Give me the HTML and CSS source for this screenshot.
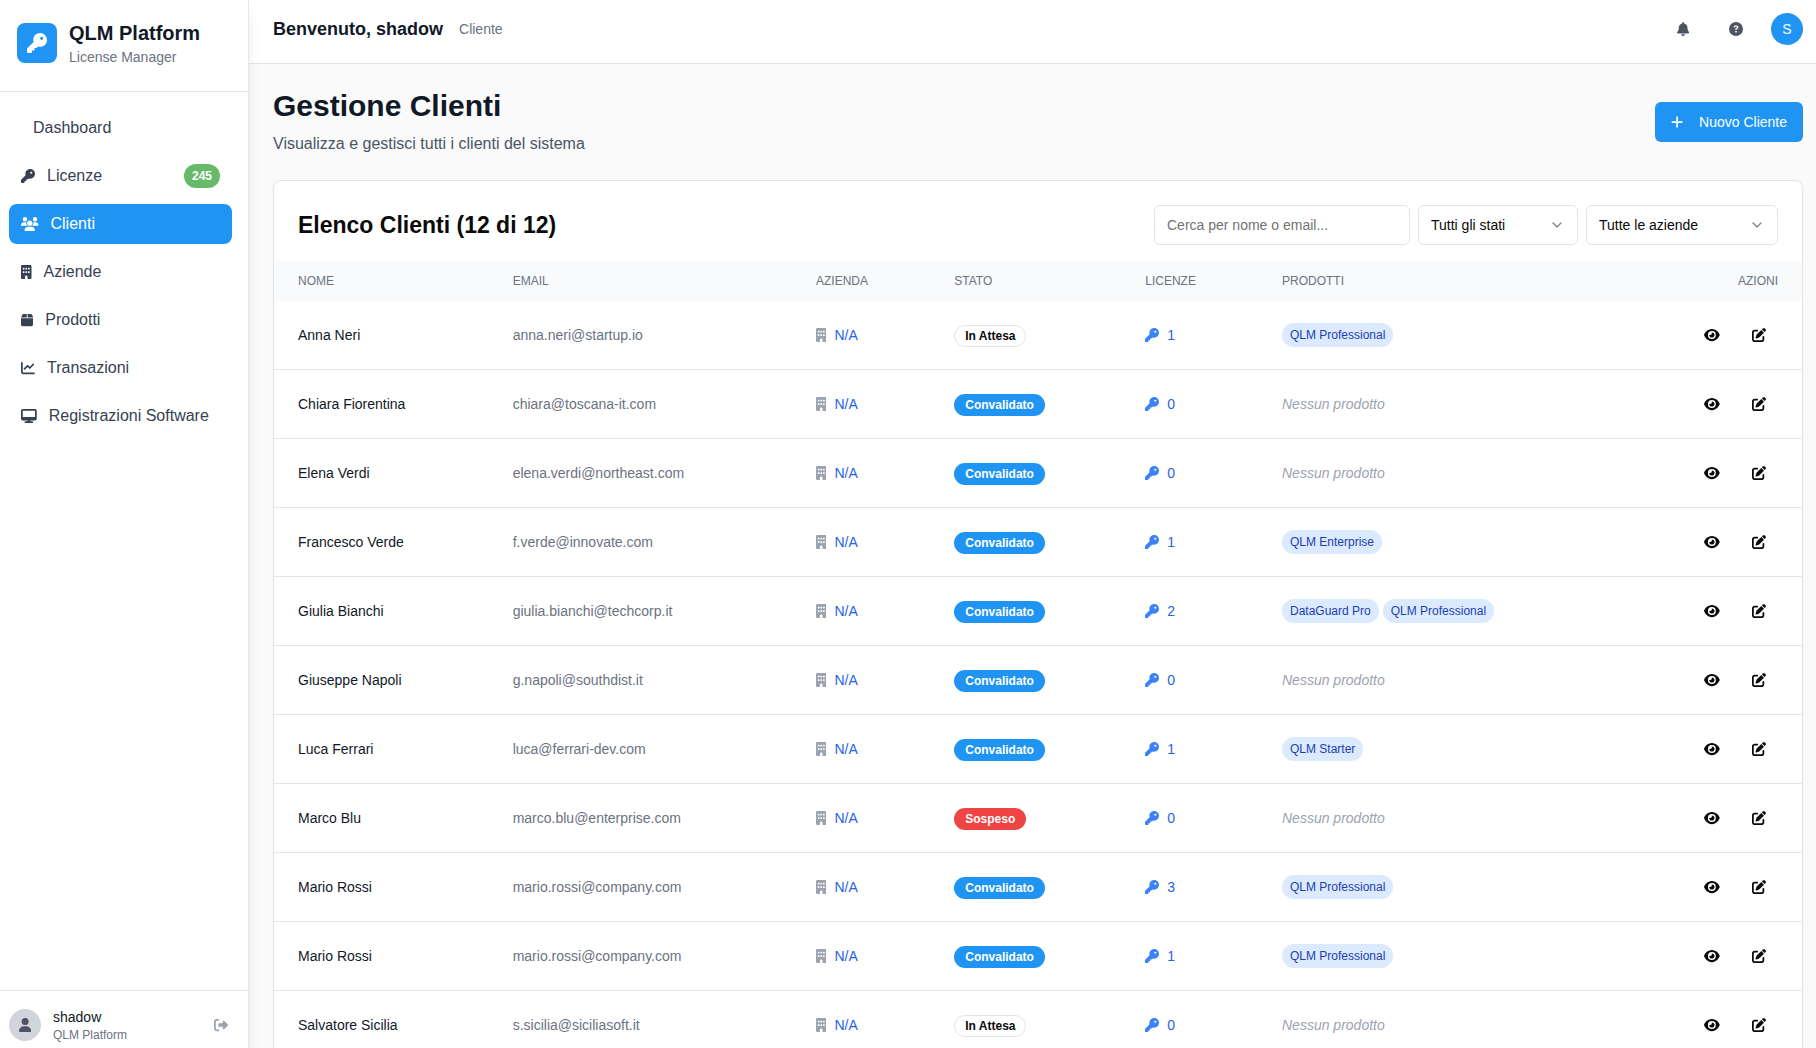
FILE: index.html
```html
<!DOCTYPE html>
<html lang="it">
<head>
<meta charset="utf-8">
<meta name="viewport" content="width=device-width, initial-scale=1">
<title>QLM Platform - Gestione Clienti</title>
<link rel="stylesheet" href="styles.css">
</head>
<body>
<svg class="sprite" aria-hidden="true">
  <defs>
    <path id="key" d="M336 352c97.2 0 176-78.8 176-176S433.2 0 336 0S160 78.8 160 176c0 18.7 2.9 36.8 8.3 53.7L7 391c-4.5 4.5-7 10.6-7 17v80c0 13.3 10.7 24 24 24h80c13.3 0 24-10.7 24-24V448h40c13.3 0 24-10.7 24-24V384h40c6.4 0 12.5-2.5 17-7l33.3-33.3c16.9 5.4 35 8.3 53.7 8.3zM376 96a40 40 0 1 1 0 80 40 40 0 1 1 0-80z"/>
    <path id="building" d="M48 0C21.5 0 0 21.5 0 48V464c0 26.5 21.5 48 48 48h96V432c0-26.5 21.5-48 48-48s48 21.5 48 48v80h96c26.5 0 48-21.5 48-48V48c0-26.5-21.5-48-48-48H48zM64 240c0-8.8 7.2-16 16-16h32c8.8 0 16 7.2 16 16v32c0 8.8-7.2 16-16 16H80c-8.8 0-16-7.2-16-16V240zm112-16h32c8.8 0 16 7.2 16 16v32c0 8.8-7.2 16-16 16H176c-8.8 0-16-7.2-16-16V240c0-8.8 7.2-16 16-16zm80 16c0-8.8 7.2-16 16-16h32c8.8 0 16 7.2 16 16v32c0 8.8-7.2 16-16 16H272c-8.8 0-16-7.2-16-16V240zM80 96h32c8.8 0 16 7.2 16 16v32c0 8.8-7.2 16-16 16H80c-8.8 0-16-7.2-16-16V112c0-8.8 7.2-16 16-16zm80 16c0-8.8 7.2-16 16-16h32c8.8 0 16 7.2 16 16v32c0 8.8-7.2 16-16 16H176c-8.8 0-16-7.2-16-16V112zM272 96h32c8.8 0 16 7.2 16 16v32c0 8.8-7.2 16-16 16H272c-8.8 0-16-7.2-16-16V112c0-8.8 7.2-16 16-16z"/>
    <path id="users" d="M144 0a80 80 0 1 1 0 160A80 80 0 1 1 144 0zM512 0a80 80 0 1 1 0 160A80 80 0 1 1 512 0zM0 298.7C0 239.8 47.8 192 106.7 192h42.7c15.9 0 31 3.5 44.6 9.7c-1.3 7.2-1.9 14.7-1.9 22.3c0 38.2 16.8 72.5 43.3 96c-.2 0-.4 0-.7 0H21.3C9.6 320 0 310.4 0 298.7zM405.3 320c-.2 0-.4 0-.7 0c26.6-23.5 43.3-57.8 43.3-96c0-7.6-.7-15-1.9-22.3c13.6-6.3 28.7-9.7 44.6-9.7h42.7C592.2 192 640 239.8 640 298.7c0 11.8-9.6 21.3-21.3 21.3H405.3zM224 224a96 96 0 1 1 192 0 96 96 0 1 1 -192 0zM128 485.3C128 411.7 187.7 352 261.3 352H378.7C452.3 352 512 411.7 512 485.3c0 14.7-11.9 26.7-26.7 26.7H154.7c-14.7 0-26.7-11.9-26.7-26.7z"/>
    <path id="eye" d="M288 32c-80.8 0-145.5 36.8-192.6 80.6C48.6 156 17.3 208 2.5 243.7c-3.3 7.9-3.3 16.7 0 24.6C17.3 304 48.6 356 95.4 399.4C142.5 443.2 207.2 480 288 480s145.5-36.8 192.6-80.6c46.8-43.5 78.1-95.4 93-131.1c3.3-7.9 3.3-16.7 0-24.6c-14.9-35.7-46.2-87.7-93-131.1C433.5 68.8 368.8 32 288 32zM144 256a144 144 0 1 1 288 0 144 144 0 1 1 -288 0zm144-64c0 35.3-28.7 64-64 64c-7.1 0-13.9-1.2-20.3-3.3c-5.5-1.8-11.9 1.6-11.7 7.4c.3 6.9 1.3 13.8 3.2 20.7c13.7 51.2 66.4 81.6 117.6 67.9s81.6-66.4 67.9-117.6c-11.1-41.5-47.8-69.4-88.6-71.1c-5.8-.2-9.2 6.1-7.4 11.7c2.1 6.4 3.3 13.2 3.3 20.3z"/>
    <path id="edit" d="M471.6 21.7c-21.9-21.9-57.3-21.9-79.2 0L362.3 51.7l97.9 97.9 30.1-30.1c21.9-21.9 21.9-57.3 0-79.2L471.6 21.7zm-299.2 220c-6.1 6.1-10.8 13.6-13.5 21.9l-29.6 88.8c-2.9 8.6-.6 18.1 5.8 24.6s15.9 8.7 24.6 5.8l88.8-29.6c8.2-2.7 15.7-7.4 21.9-13.5L437.7 172.3 339.7 74.3 172.4 241.7zM96 64C43 64 0 107 0 160V416c0 53 43 96 96 96H352c53 0 96-43 96-96V320c0-17.7-14.3-32-32-32s-32 14.3-32 32v96c0 17.7-14.3 32-32 32H96c-17.7 0-32-14.3-32-32V160c0-17.7 14.3-32 32-32h96c17.7 0 32-14.3 32-32s-14.3-32-32-32H96z"/>
    <path id="chevron" d="m6 9 6 6 6-6" fill="none" stroke="currentColor" stroke-width="2" stroke-linecap="round" stroke-linejoin="round"/>
  </defs>
</svg>
<div class="app">
  <aside class="sidebar">
    <div class="brand">
      <div class="brand-logo"><svg class="icon icon-large" viewBox="0 0 512 512"><use href="#key"/></svg></div>
      <div>
        <div class="brand-name">QLM Platform</div>
        <div class="brand-sub">License Manager</div>
      </div>
    </div>
    <nav class="nav">
      <a class="nav-item nav-item-plain" href="#">Dashboard</a>
      <a class="nav-item" href="#"><svg class="icon" viewBox="0 0 512 512"><use href="#key"/></svg>Licenze<span class="nav-count">245</span></a>
      <a class="nav-item active" href="#" aria-current="page"><svg class="icon" viewBox="0 0 640 512"><use href="#users"/></svg>Clienti</a>
      <a class="nav-item" href="#"><svg class="icon" viewBox="0 0 384 512"><use href="#building"/></svg>Aziende</a>
      <a class="nav-item" href="#"><svg class="icon" viewBox="0 0 448 512"><path d="M50.7 58.5L0 160H208V32H93.7C75.5 32 58.9 42.3 50.7 58.5zM240 160H448L397.3 58.5C389.1 42.3 372.5 32 354.3 32H240V160zm208 32H0V416c0 35.3 28.7 64 64 64H384c35.3 0 64-28.7 64-64V192z"/></svg>Prodotti</a>
      <a class="nav-item" href="#"><svg class="icon" viewBox="0 0 512 512"><path d="M64 64c0-17.7-14.3-32-32-32S0 46.3 0 64V400c0 44.2 35.8 80 80 80H480c17.7 0 32-14.3 32-32s-14.3-32-32-32H80c-8.8 0-16-7.2-16-16V64zm406.6 86.6c12.5-12.5 12.5-32.8 0-45.3s-32.8-12.5-45.3 0L320 210.7l-57.4-57.4c-12.5-12.5-32.8-12.5-45.3 0l-112 112c-12.5 12.5-12.5 32.8 0 45.3s32.8 12.5 45.3 0L240 221.3l57.4 57.4c12.5 12.5 32.8 12.5 45.3 0l128-128z"/></svg>Transazioni</a>
      <a class="nav-item" href="#"><svg class="icon" viewBox="0 0 576 512"><path d="M64 0C28.7 0 0 28.7 0 64V352c0 35.3 28.7 64 64 64H240l-10.7 32H160c-17.7 0-32 14.3-32 32s14.3 32 32 32H416c17.7 0 32-14.3 32-32s-14.3-32-32-32H346.7L336 416H512c35.3 0 64-28.7 64-64V64c0-35.3-28.7-64-64-64H64zM512 64V288H64V64H512z"/></svg>Registrazioni Software</a>
    </nav>
    <div class="account">
      <div class="account-avatar"><svg class="icon" viewBox="0 0 448 512"><path d="M224 256A128 128 0 1 0 224 0a128 128 0 1 0 0 256zm-45.7 48C79.8 304 0 383.8 0 482.3C0 498.7 13.3 512 29.7 512H418.3c16.4 0 29.7-13.3 29.7-29.7C448 383.8 368.2 304 269.7 304H178.3z"/></svg></div>
      <div class="account-text">
        <div class="account-name">shadow</div>
        <div class="account-org">QLM Platform</div>
      </div>
      <button class="logout" type="button" aria-label="Esci"><svg class="icon" viewBox="0 0 512 512"><path d="M377.9 105.9L500.7 228.7c7.2 7.2 11.3 17.1 11.3 27.3s-4.1 20.1-11.3 27.3L377.9 406.1c-6.4 6.4-15 9.9-24 9.9c-18.7 0-33.9-15.2-33.9-33.9l0-62.1-128 0c-17.7 0-32-14.3-32-32l0-64c0-17.7 14.3-32 32-32l128 0 0-62.1c0-18.7 15.2-33.9 33.9-33.9c9 0 17.6 3.6 24 9.9zM160 96L96 96c-17.7 0-32 14.3-32 32l0 256c0 17.7 14.3 32 32 32l64 0c17.7 0 32 14.3 32 32s-14.3 32-32 32l-64 0c-53 0-96-43-96-96L0 128C0 75 43 32 96 32l64 0c17.7 0 32 14.3 32 32s-14.3 32-32 32z"/></svg></button>
    </div>
  </aside>
  <div class="page">
    <header class="topbar">
      <div class="welcome">
        <h2 class="welcome-title">Benvenuto, shadow</h2>
        <span class="welcome-role">Cliente</span>
      </div>
      <div class="topbar-tools">
        <button class="tool" type="button" aria-label="Notifiche"><svg class="icon" viewBox="0 0 448 512"><path d="M224 0c-17.7 0-32 14.3-32 32V51.2C119 66 64 130.6 64 208v18.8c0 47-17.3 92.4-48.5 127.6l-7.4 8.3c-8.4 9.4-10.4 22.9-5.3 34.4S19.4 416 32 416H416c12.6 0 24-7.4 29.2-18.9s3.1-25-5.3-34.4l-7.4-8.3C401.3 319.2 384 273.9 384 226.8V208c0-77.4-55-142-128-156.8V32c0-17.7-14.3-32-32-32zm45.3 493.3c12-12 18.7-28.3 18.7-45.3H224 160c0 17 6.7 33.3 18.7 45.3s28.3 18.7 45.3 18.7s33.3-6.7 45.3-18.7z"/></svg></button>
        <button class="tool" type="button" aria-label="Aiuto"><svg class="icon" viewBox="0 0 512 512"><path d="M256 512A256 256 0 1 0 256 0a256 256 0 1 0 0 512zM169.8 165.3c7.9-22.3 29.1-37.3 52.8-37.3h58.3c34.9 0 63.1 28.3 63.1 63.1c0 22.6-12.1 43.5-31.7 54.8L280 264.4c-.2 13-10.9 23.6-24 23.6c-13.3 0-24-10.7-24-24V250.5c0-8.6 4.6-16.5 12.1-20.8l44.3-25.4c4.7-2.7 7.6-7.7 7.6-13.1c0-8.4-6.8-15.1-15.1-15.1H222.6c-3.4 0-6.4 2.1-7.5 5.3l-.4 1.2c-4.4 12.5-18.2 19-30.6 14.6s-19-18.2-14.6-30.6l.4-1.2zM224 352a32 32 0 1 1 64 0 32 32 0 1 1 -64 0z"/></svg></button>
        <button class="profile" type="button">S</button>
      </div>
    </header>
    <main class="content">
      <div class="page-head">
        <div>
          <h1 class="page-title">Gestione Clienti</h1>
          <p class="page-sub">Visualizza e gestisci tutti i clienti del sistema</p>
        </div>
        <button class="primary" type="button"><svg class="icon" viewBox="0 0 448 512"><path d="M256 80c0-17.7-14.3-32-32-32s-32 14.3-32 32V224H48c-17.7 0-32 14.3-32 32s14.3 32 32 32H192V432c0 17.7 14.3 32 32 32s32-14.3 32-32V288H400c17.7 0 32-14.3 32-32s-14.3-32-32-32H256V80z"/></svg>Nuovo Cliente</button>
      </div>
      <section class="card">
        <div class="card-head">
          <h3 class="card-title">Elenco Clienti (12 di 12)</h3>
          <div class="filters">
            <input class="field search" type="text" placeholder="Cerca per nome o email..." aria-label="Cerca clienti">
            <div class="select select-status">
              <select class="field" aria-label="Stato"><option>Tutti gli stati</option></select>
              <svg class="chevron" viewBox="0 0 24 24"><use href="#chevron"/></svg>
            </div>
            <div class="select select-company">
              <select class="field" aria-label="Azienda"><option>Tutte le aziende</option></select>
              <svg class="chevron" viewBox="0 0 24 24"><use href="#chevron"/></svg>
            </div>
          </div>
        </div>
        <table class="clients">
          <colgroup><col class="col-name"><col class="col-email"><col class="col-company"><col class="col-status"><col class="col-licenses"><col><col class="col-actions"></colgroup>
          <thead>
            <tr><th>NOME</th><th>EMAIL</th><th>AZIENDA</th><th>STATO</th><th>LICENZE</th><th>PRODOTTI</th><th class="actions-head">AZIONI</th></tr>
          </thead>
          <tbody id="rows"></tbody>
        </table>
      </section>
    </main>
  </div>
</div>
<script src="clients.js"></script>
</body>
</html>
```
FILE: clients.js
```js
const clients = [
  ["Anna Neri", "anna.neri@startup.io", "In Attesa", 1, ["QLM Professional"]],
  ["Chiara Fiorentina", "chiara@toscana-it.com", "Convalidato", 0, []],
  ["Elena Verdi", "elena.verdi@northeast.com", "Convalidato", 0, []],
  ["Francesco Verde", "f.verde@innovate.com", "Convalidato", 1, ["QLM Enterprise"]],
  ["Giulia Bianchi", "giulia.bianchi@techcorp.it", "Convalidato", 2, ["DataGuard Pro", "QLM Professional"]],
  ["Giuseppe Napoli", "g.napoli@southdist.it", "Convalidato", 0, []],
  ["Luca Ferrari", "luca@ferrari-dev.com", "Convalidato", 1, ["QLM Starter"]],
  ["Marco Blu", "marco.blu@enterprise.com", "Sospeso", 0, []],
  ["Mario Rossi", "mario.rossi@company.com", "Convalidato", 3, ["QLM Professional"]],
  ["Mario Rossi", "mario.rossi@company.com", "Convalidato", 1, ["QLM Professional"]],
  ["Salvatore Sicilia", "s.sicilia@siciliasoft.it", "In Attesa", 0, []]
];

const statusClass = { "In Attesa": "pending", "Convalidato": "valid", "Sospeso": "suspended" };

const icon = (name, width) =>
  `<svg class="icon" viewBox="0 0 ${width} 512"><use href="#${name}"/></svg>`;

const productList = (products) => products.length
  ? `<div class="products">${products.map((p) => `<span class="product">${p}</span>`).join("")}</div>`
  : `<span class="no-products">Nessun prodotto</span>`;

document.getElementById("rows").innerHTML = clients.map(([name, email, status, licenses, products]) => `
  <tr>
    <td class="name">${name}</td>
    <td class="email">${email}</td>
    <td><a class="metric company" href="#">${icon("building", 384)}<span>N/A</span></a></td>
    <td class="status-cell"><span class="status ${statusClass[status]}">${status}</span></td>
    <td><a class="metric licenses" href="#">${icon("key", 512)}<span>${licenses}</span></a></td>
    <td>${productList(products)}</td>
    <td>
      <div class="actions">
        <button class="action" type="button" aria-label="Visualizza ${name}">${icon("eye", 576)}</button>
        <button class="action" type="button" aria-label="Modifica ${name}">${icon("edit", 512)}</button>
      </div>
    </td>
  </tr>`).join("");
```
FILE: styles.css
```css
*, *::before, *::after { box-sizing: border-box; }

body {
  margin: 0;
  background: #fafafa;
  color: #0a0a0a;
  font-family: "Liberation Sans", Arial, sans-serif;
  font-size: 14px;
  line-height: 20px;
}

h1, h2, h3, p { margin: 0; }
a { color: inherit; text-decoration: none; }
button { font: inherit; color: inherit; background: none; border: 0; padding: 0; cursor: pointer; }

.sprite { display: none; }
.icon { display: block; flex: none; height: 14px; width: auto; fill: currentColor; }
.icon-large { height: 20px; }

.app { display: flex; height: 100vh; overflow: hidden; }

/* Sidebar */
.sidebar {
  position: relative;
  z-index: 1;
  display: flex;
  flex-direction: column;
  flex: none;
  width: 249px;
  background: #fff;
  border-right: 1px solid #e5e7eb;
  box-shadow: 0 10px 15px -3px rgba(0, 0, 0, .1), 0 4px 6px -4px rgba(0, 0, 0, .1);
}
.brand {
  display: flex;
  align-items: center;
  gap: 12px;
  padding: 19px 16px 24px 17px;
  border-bottom: 1px solid #e5e7eb;
}
.brand-logo {
  display: grid;
  place-items: center;
  width: 40px;
  height: 40px;
  border-radius: 8px;
  background: #2094f3;
  color: #fff;
}
.brand-name { font-size: 20px; line-height: 28px; font-weight: 700; color: #111827; }
.brand-sub { color: #6b7280; }
.nav {
  display: flex;
  flex-direction: column;
  flex: 1;
  gap: 8px;
  padding: 16px 16px 16px 9px;
}
.nav-item {
  display: flex;
  align-items: center;
  gap: 12px;
  height: 40px;
  padding: 0 12px;
  border-radius: 8px;
  font-size: 16px;
  line-height: 24px;
  color: #374151;
}
.nav-item-plain { padding-left: 24px; }
.nav-item.active { background: #2094f3; color: #fff; }
.nav-count {
  margin-left: auto;
  padding: 4px 8px;
  border-radius: 12px;
  background: #66bb6a;
  color: #fff;
  font-size: 12px;
  line-height: 16px;
  font-weight: 700;
}
.account {
  display: flex;
  align-items: center;
  gap: 12px;
  padding: 16px 20px 5px 9px;
  border-top: 1px solid #e5e7eb;
}
.account-avatar {
  display: grid;
  place-items: center;
  width: 32px;
  height: 32px;
  border-radius: 50%;
  background: #d1d5db;
  color: #4b5563;
}
.account-text { flex: 1; }
.account-name { color: #111827; }
.account-org { font-size: 12px; line-height: 16px; color: #6b7280; }
.logout { color: #9ca3af; }

/* Top bar */
.page { display: flex; flex-direction: column; flex: 1; min-width: 0; }
.topbar {
  display: flex;
  align-items: center;
  justify-content: space-between;
  padding: 13px 13px 18px 24px;
  background: #fff;
  border-bottom: 1px solid #e5e5e5;
}
.welcome { display: flex; align-items: center; gap: 16px; }
.welcome-title { font-size: 18px; line-height: 28px; font-weight: 700; color: #111827; }
.welcome-role { color: #6b7280; }
.topbar-tools { display: flex; align-items: center; gap: 16px; color: #4b5563; }
.tool { padding: 0 12px; }
.profile { width: 32px; height: 32px; border-radius: 50%; background: #2094f3; color: #fff; }

/* Page content */
.content { flex: 1; min-height: 0; overflow: hidden; padding: 24px 13px 24px 24px; }
.page-head { display: flex; align-items: center; justify-content: space-between; margin-bottom: 24px; }
.page-title { font-size: 30px; line-height: 36px; font-weight: 700; color: #111827; }
.page-sub { margin-top: 8px; font-size: 16px; line-height: 24px; color: #4b5563; }
.primary {
  display: flex;
  align-items: center;
  gap: 16px;
  height: 40px;
  padding: 0 16px;
  border-radius: 6px;
  background: #2094f3;
  color: #fff;
}

.card {
  background: #fff;
  border: 1px solid #e5e5e5;
  border-radius: 8px;
  box-shadow: 0 1px 2px rgba(0, 0, 0, .05);
}
.card-head {
  display: flex;
  align-items: center;
  justify-content: space-between;
  padding: 24px 24px 16px;
}
.card-title { font-size: 23px; line-height: 24px; font-weight: 700; }
.filters { display: flex; gap: 8px; }
.field {
  width: 100%;
  height: 40px;
  padding: 0 12px;
  border: 1px solid #e5e5e5;
  border-radius: 6px;
  background: #fff;
  color: #0a0a0a;
  font: inherit;
  appearance: none;
}
.field::placeholder { color: #737373; }
.search { width: 256px; }
.select { position: relative; }
.select-status { width: 160px; }
.select-company { width: 192px; }
.chevron {
  position: absolute;
  top: 12px;
  right: 13px;
  width: 16px;
  height: 16px;
  opacity: .5;
  pointer-events: none;
}

/* Clients table */
.clients { width: 100%; table-layout: fixed; border-collapse: separate; border-spacing: 0; }
.col-name { width: 14.05%; }
.col-email { width: 19.85%; }
.col-company { width: 9.05%; }
.col-status { width: 12.5%; }
.col-licenses { width: 8.95%; }
.col-actions { width: 136px; }
.clients th {
  padding: 12px 24px;
  background: #f8fafc;
  color: #6b7280;
  font-size: 12px;
  line-height: 16px;
  font-weight: 400;
  text-align: left;
}
.clients .actions-head { text-align: right; }
.clients td { padding: 16px 24px; border-bottom: 1px solid #e5e5e5; white-space: nowrap; }
.clients .status-cell { padding-top: 18px; }
.name { color: #111827; }
.email { color: #6b7280; }
.metric { display: flex; align-items: center; gap: 8px; color: #2563eb; }
.company .icon { color: #9ca3af; }
.licenses .icon { color: #3b82f6; }
.status {
  display: inline-flex;
  padding: 2px 10px;
  border: 1px solid transparent;
  border-radius: 11px;
  font-size: 12px;
  line-height: 16px;
  font-weight: 700;
}
.pending { border-color: #e5e5e5; }
.valid { background: #2094f3; color: #fff; }
.suspended { background: #ef4444; color: #fff; }
.products { display: flex; gap: 4px; }
.product {
  padding: 4px 8px;
  border-radius: 12px;
  background: #dbeafe;
  color: #1e40af;
  font-size: 12px;
  line-height: 16px;
}
.no-products { color: #9ca3af; font-style: italic; }
.actions { display: flex; justify-content: flex-end; gap: 8px; }
.action { height: 36px; padding: 0 12px; }
```
